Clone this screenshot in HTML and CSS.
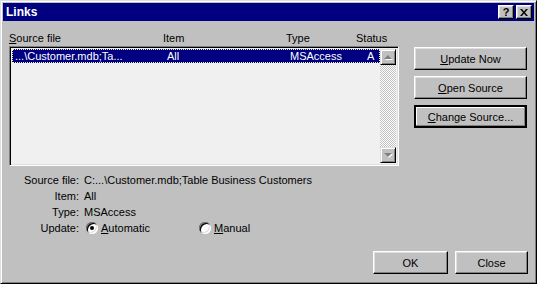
FILE: index.html
```html
<!DOCTYPE html>
<html lang="en">
<head>
  <meta charset="utf-8">
  <title>Links</title>
  <link rel="stylesheet" href="styles.css">
</head>
<body>
  <div class="window">
    <div class="titlebar">
      <span class="title">Links</span>
      <div class="caption-btns">
        <span class="cap-btn help">?</span>
        <span class="cap-btn close">
          <svg width="8" height="7" viewBox="0 0 8 7">
            <path d="M0 0h2l2 2.5L6 0h2L5 3.5 8 7H6L4 4.5 2 7H0l3-3.5z" fill="#000"/>
          </svg>
        </span>
      </div>
    </div>

    <div class="content">
      <div class="main">
        <div class="links">
          <div class="list-head cols">
            <span><u>S</u>ource file</span>
            <span>Item</span>
            <span>Type</span>
            <span>Status</span>
          </div>
          <div class="listbox">
            <div class="rows">
              <div class="row selected cols">
                <span>...\Customer.mdb;Ta...</span>
                <span>All</span>
                <span>MSAccess</span>
                <span>A</span>
              </div>
            </div>
            <div class="scrollbar">
              <div class="sb-btn"><span class="arrow up"></span></div>
              <div class="sb-track"></div>
              <div class="sb-btn"><span class="arrow down"></span></div>
            </div>
          </div>
        </div>

        <div class="side-btns">
          <button class="btn wide"><u>U</u>pdate Now</button>
          <button class="btn wide"><u>O</u>pen Source</button>
          <button class="btn wide default"><u>C</u>hange Source...</button>
        </div>
      </div>

      <div class="details">
        <span class="label">Source file:</span>
        <span>C:...\Customer.mdb;Table Business Customers</span>
        <span class="label">Item:</span>
        <span>All</span>
        <span class="label">Type:</span>
        <span>MSAccess</span>
        <span class="label">Update:</span>
        <div class="options">
          <label class="option auto"><span class="radio checked"></span><span><u>A</u>utomatic</span></label>
          <label class="option"><span class="radio"></span><span><u>M</u>anual</span></label>
        </div>
      </div>

      <div class="footer">
        <button class="btn ok">OK</button>
        <button class="btn close-btn">Close</button>
      </div>
    </div>
  </div>
</body>
</html>
```

FILE: styles.css
```css
* {
  box-sizing: border-box;
}

body {
  margin: 0;
  background: #c0c0c0;
  font-family: 'Liberation Sans', Arial, sans-serif;
  font-size: 11px;
  color: #000;
}

u {
  text-decoration: underline;
  text-underline-offset: 1px;
}

.window {
  width: 537px;
  height: 284px;
  background: #c0c0c0;
  border: 1px solid;
  border-color: #dfdfdf #000 #000 #dfdfdf;
  box-shadow: inset 1px 1px #fff, inset -1px -1px #808080;
  padding: 2px;
  display: flex;
  flex-direction: column;
}

.titlebar {
  height: 18px;
  background: #000080;
  color: #fff;
  display: flex;
  align-items: center;
  justify-content: space-between;
  padding: 0 2px 0 3px;
}

.title {
  font-weight: bold;
  font-size: 12px;
}

.caption-btns {
  display: flex;
  gap: 2px;
}

.cap-btn {
  width: 16px;
  height: 14px;
  background: #c0c0c0;
  border: 1px solid;
  border-color: #fff #000 #000 #fff;
  box-shadow: inset -1px -1px #808080, inset 1px 1px #dfdfdf;
  color: #000;
  display: flex;
  align-items: center;
  justify-content: center;
  font-weight: bold;
  font-size: 11px;
  line-height: 1;
}

.content {
  flex: 1;
  padding: 11px 6px 0 6px;
  display: flex;
  flex-direction: column;
}

.main {
  display: flex;
  justify-content: space-between;
}

.cols {
  display: grid;
  grid-template-columns: 154px 123px 70px auto;
}

.list-head {
  height: 14px;
  line-height: 13px;
}

.listbox {
  width: 390px;
  height: 120px;
  border: 1px solid;
  border-color: #808080 #fff #fff #808080;
  box-shadow: inset 1px 1px #000, inset -1px -1px #dfdfdf;
  background: #f0f0f0;
  padding: 2px;
  display: flex;
}

.rows {
  flex: 1;
}

.row {
  height: 14px;
  line-height: 12px;
  padding-left: 2px;
  grid-template-columns: 152px 123px 77px auto;
}

.row.selected {
  background: #000080;
  color: #fff;
  border: 1px dotted #f0f0c0;
}

.scrollbar {
  width: 16px;
  display: flex;
  flex-direction: column;
}

.sb-track {
  flex: 1;
  background-color: #fff;
  background-image: repeating-conic-gradient(#c0c0c0 0 25%, #fff 0 50%);
  background-size: 2px 2px;
}

.sb-btn {
  height: 16px;
  background: #c0c0c0;
  border: 1px solid;
  border-color: #dfdfdf #000 #000 #dfdfdf;
  box-shadow: inset 1px 1px #fff, inset -1px -1px #808080;
  display: flex;
  align-items: center;
  justify-content: center;
}

.arrow {
  width: 0;
  height: 0;
  border-left: 4px solid transparent;
  border-right: 4px solid transparent;
  filter: drop-shadow(1px 1px 0 #fff);
}

.arrow.up {
  border-bottom: 4px solid #808080;
}

.arrow.down {
  border-top: 4px solid #808080;
}

.side-btns {
  display: flex;
  flex-direction: column;
  gap: 6px;
  margin-top: 15px;
  margin-right: 1px;
}

.btn {
  font-family: inherit;
  font-size: 11px;
  color: #000;
  background: #c0c0c0;
  height: 23px;
  padding: 0;
  border: 1px solid;
  border-color: #fff #000 #000 #fff;
  box-shadow: inset -1px -1px #808080, inset 1px 1px #dfdfdf;
}

.btn.wide {
  width: 113px;
}

.btn.default {
  border: 2px solid #000;
  box-shadow: inset -1px -1px #808080, inset 1px 1px #fff;
}

.details {
  display: grid;
  grid-template-columns: 70px auto;
  column-gap: 5px;
  grid-auto-rows: 16px;
  align-items: center;
  margin-top: 6px;
}

.label {
  text-align: right;
}

.options {
  display: flex;
  align-items: center;
  padding-left: 2px;
}

.option {
  display: flex;
  align-items: center;
  gap: 3px;
}

.option.auto {
  width: 113px;
}

.radio {
  width: 12px;
  height: 12px;
  border-radius: 50%;
  background: #fff;
  box-shadow: inset 1px 1px #808080, inset -1px -1px #fff, inset 2px 2px #000, inset -2px -2px #dfdfdf;
  display: flex;
  align-items: center;
  justify-content: center;
}

.radio.checked::after {
  content: '';
  width: 4px;
  height: 4px;
  border-radius: 50%;
  background: #000;
}

.footer {
  display: flex;
  justify-content: flex-end;
  gap: 7px;
  margin-top: 15px;
}

.btn.ok {
  width: 75px;
}

.btn.close-btn {
  width: 73px;
}
```
